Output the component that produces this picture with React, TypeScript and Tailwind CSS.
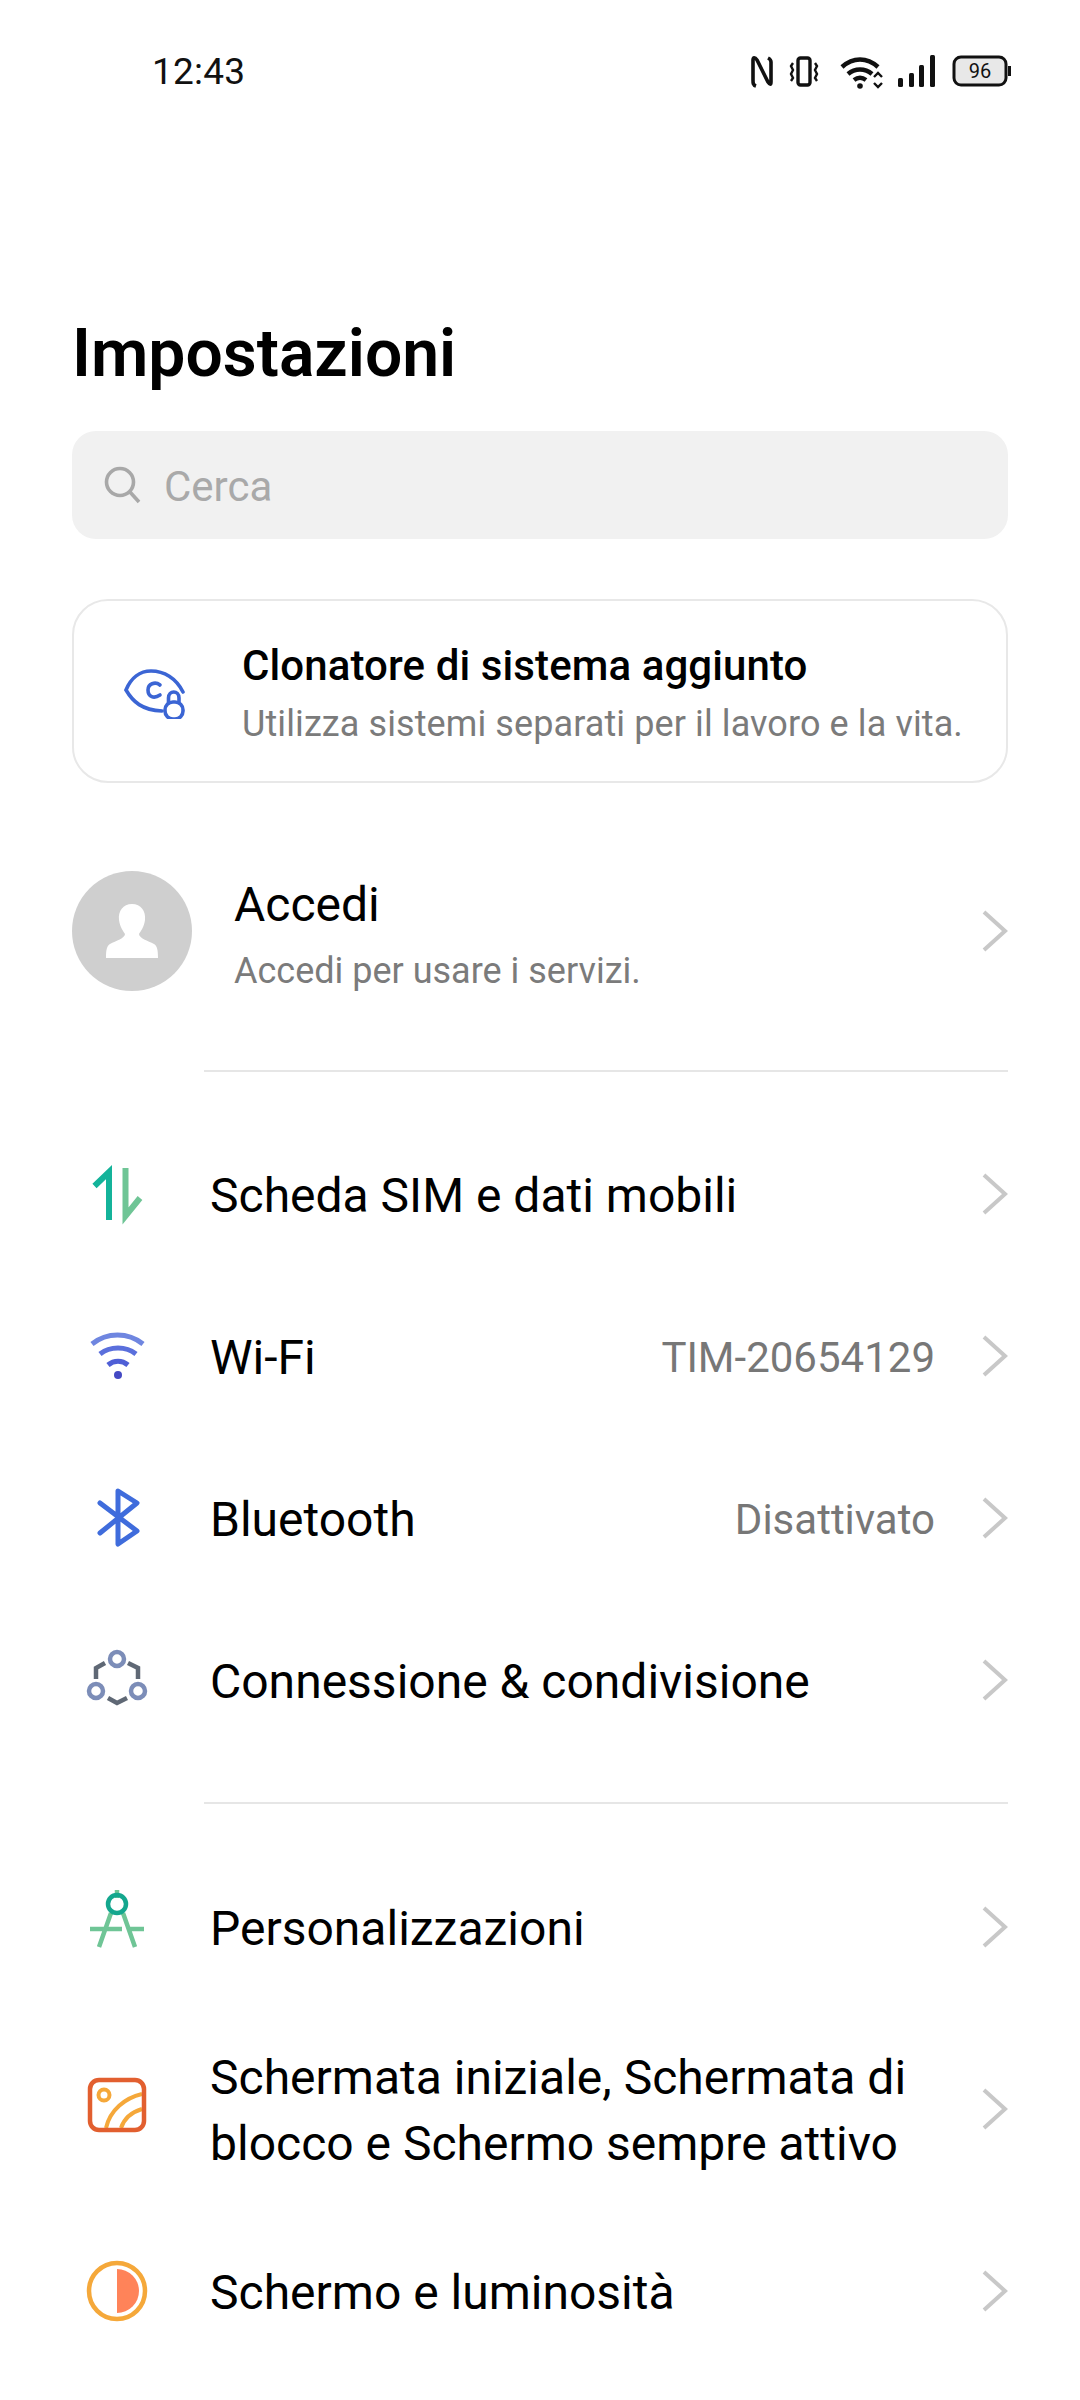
const font = "font-['Roboto',sans-serif]";

const Chevron = () => (
  <svg width="30" height="48" viewBox="0 0 30 48" fill="none" className="shrink-0">
    <path d="M6 5 L27 24 L6 43" stroke="#c8c8c8" strokeWidth="4" />
  </svg>
);

const Icon = ({ children, top = 0 }: { children: React.ReactNode; top?: number }) => (
  <svg width="120" height="120" viewBox={`0 ${top} 120 120`} fill="none" className="shrink-0 ml-[-12px]">
    {children}
  </svg>
);

const Row = ({
  icon,
  title,
  value,
  tall,
}: {
  icon: React.ReactNode;
  title: React.ReactNode;
  value?: string;
  tall?: boolean;
}) => (
  <div className={`flex items-center pl-[72px] pr-[72px] ${tall ? "h-[202px]" : "h-[162px]"}`}>
    {icon}
    <div className="ml-[30px] flex-1 pt-[3px] text-[48px] leading-[66px] text-black">{title}</div>
    {value && <span className="mr-[43px] pt-[2px] text-[42px] text-[#777777]">{value}</span>}
    <Chevron />
  </div>
);

const Divider = () => <div className="ml-[204px] mr-[72px] h-[2px] bg-[#e6e6e6]" />;

export default function App() {
  return (
    <div className={`${font} w-[1080px] h-[2400px] overflow-hidden bg-white`}>
      {/* status bar */}
      <div className="flex items-center justify-between h-[144px] pl-[152px] pr-[30px]">
        <span className="text-[37px] text-[#111111] tracking-[0.2px]">12:43</span>
        <svg width="300" height="40" viewBox="0 0 300 40" fill="none">
          <path d="M6 34 C3 33 3 31 3 28 V8 C3 5 5 5 7 8 L18 30 C20 33 21 33 21 30 V10 C21 8 20 7 18 6" stroke="#111" strokeWidth="3.6" />
          <rect x="48" y="6" width="12" height="27" rx="2.5" stroke="#111" strokeWidth="3.4" />
          <path d="M43 11 l-2 3 2 4 -2 4 2 4 -2 3 M65 11 l2 3 -2 4 2 4 -2 4 2 3" stroke="#111" strokeWidth="2.4" />
          <path d="M92 15 C103 5 117 5 128 15" stroke="#111" strokeWidth="4.5" />
          <path d="M98 22 C105 16 115 16 122 22" stroke="#111" strokeWidth="4.5" />
          <path d="M104 28 C108 25 112 25 116 28" stroke="#111" strokeWidth="4.5" />
          <circle cx="110" cy="34" r="2.8" fill="#111" />
          <path d="M124 25 l4 -4 4 4 M124 31 l4 4 4 -4" stroke="#111" strokeWidth="2.4" />
          <rect x="148" y="26" width="5" height="9" rx="1.5" fill="#111" />
          <rect x="159" y="21" width="5" height="14" rx="1.5" fill="#111" />
          <rect x="169" y="13" width="5" height="22" rx="1.5" fill="#111" />
          <rect x="180" y="3" width="5" height="32" rx="1.5" fill="#111" />
          <rect x="204" y="5" width="52" height="28" rx="7" fill="#e8e8e8" stroke="#111" strokeWidth="3" />
          <rect x="258" y="14" width="3" height="10" fill="#111" />
          <text x="230" y="26" textAnchor="middle" fontSize="20" fontFamily="Roboto" fill="#111">96</text>
        </svg>
      </div>

      {/* title */}
      <div className="mt-[170px] pl-[72px] text-[66px] leading-[80px] font-semibold text-black">Impostazioni</div>

      {/* search */}
      <div className="mt-[37px] mx-[72px] h-[108px] rounded-[24px] bg-[#f1f1f1] flex items-center pl-[32px]">
        <svg width="38" height="38" viewBox="0 0 38 38" fill="none">
          <circle cx="16" cy="16" r="13.5" stroke="#a8a8a8" strokeWidth="3.6" />
          <path d="M26 26 L35 36" stroke="#a8a8a8" strokeWidth="3.6" />
        </svg>
        <span className="ml-[22px] pt-[2px] text-[42px] text-[#a9a9a9]">Cerca</span>
      </div>

      {/* card */}
      <div className="mt-[60px] mx-[72px] h-[184px] rounded-[36px] border-2 border-[#e8e8e8] flex items-center pl-[50px]">
        <svg width="64" height="56" viewBox="24 23 64 56" fill="none" className="shrink-0">
          <path d="M83 52 C76 38 64 31 51 31 C40 31 31 38 26 50 C33 62 42 70 62 71" stroke="#3b65d4" strokeWidth="3.6" strokeLinecap="round" />
          <path d="M60 45 C55 41 48 44 48 50 C48 57 54 59 60 55" stroke="#3b65d4" strokeWidth="3.6" strokeLinecap="round" />
          <rect x="65" y="62" width="18" height="17" rx="8" stroke="#3b65d4" strokeWidth="3.6" />
          <path d="M68.500 63 V58 C68.500 50 79 50 79 58 V63" stroke="#3b65d4" strokeWidth="3.6" />
        </svg>
        <div className="ml-[54px] pt-[4px]">
          <div className="text-[42px] leading-[50px] font-medium tracking-[0.1px] text-black">Clonatore di sistema aggiunto</div>
          <div className="mt-[12px] text-[36px] leading-[42px] tracking-[0.1px] text-[#7b7b7b]">Utilizza sistemi separati per il lavoro e la vita.</div>
        </div>
      </div>

      {/* profile */}
      <div className="mt-[88px] mx-[72px] flex items-center h-[120px]">
        <div className="w-[120px] h-[120px] rounded-full bg-[#cfcfcf] flex items-center justify-center shrink-0">
          <svg width="56" height="56" viewBox="0 0 56 56">
            <path d="M28 1 C37 1 42 8 41 17 C40 24 37 28 35 31 C35 35 44 38 50 41 C53 43 54 46 54 55 H2 C2 46 3 43 6 41 C12 38 21 35 21 31 C19 28 16 24 15 17 C14 8 19 1 28 1 Z" fill="#fff" />
          </svg>
        </div>
        <div className="ml-[42px] flex-1 pt-[6px]">
          <div className="text-[48px] leading-[60px] text-black">Accedi</div>
          <div className="mt-[14px] text-[36px] leading-[44px] text-[#7b7b7b]">Accedi per usare i servizi.</div>
        </div>
        <Chevron />
      </div>

      <div className="mt-[79px]"><Divider /></div>

      <div className="mt-[41px]">
        <Row
          title="Scheda SIM e dati mobili"
          icon={
            <Icon top={4}>
              <path d="M34.500 56 L49 42 V90" stroke="#14b39a" strokeWidth="6" />
              <path d="M65.500 38 V86 L80 68" stroke="#6fc596" strokeWidth="6" />
            </Icon>
          }
        />
        <Row
          title="Wi-Fi"
          value="TIM-20654129"
          icon={
            <Icon>
              <path d="M32 48 C47 36 68 36 83 48" stroke="#6f86e0" strokeWidth="5" />
              <path d="M40 58 C50 50 66 50 76 58" stroke="#5a6fdc" strokeWidth="5" />
              <path d="M48 69 C54 64 62 64 68 69" stroke="#4f5fd6" strokeWidth="5" />
              <circle cx="58" cy="79" r="4" fill="#4449c4" />
            </Icon>
          }
        />
        <Row
          title="Bluetooth"
          value="Disattivato"
          icon={
            <Icon>
              <path d="M40 45 L77 73 L58 86 V33 L77 45 L40 75" stroke="#3f6cdc" strokeWidth="5" strokeLinejoin="round" strokeLinecap="round" />
            </Icon>
          }
        />
        <Row
          title="Connessione & condivisione"
          icon={
            <Icon>
              <circle cx="57" cy="39" r="7" stroke="#7c8db8" strokeWidth="4.500" />
              <circle cx="36" cy="71" r="7" stroke="#7c8db8" strokeWidth="4.500" />
              <circle cx="78" cy="71" r="7" stroke="#7c8db8" strokeWidth="4.500" />
              <path d="M45 43 L36 48 V59 M68 43 L78 48 V59 M48 78 L57 83 L67 78" stroke="#5f6875" strokeWidth="4.500" />
            </Icon>
          }
        />
      </div>

      <div className="mt-[41px]"><Divider /></div>

      <div className="mt-[42px]">
        <Row
          title="Personalizzazioni"
          icon={
            <Icon top={4}>
              <path d="M57 27 V35" stroke="#6fc596" strokeWidth="4.500" />
              <path d="M30 66 H62 M68 66 H84 M51 50 L39 84 M63 50 L75 84" stroke="#6fc596" strokeWidth="4.500" />
              <circle cx="57" cy="41" r="9" stroke="#14a78e" strokeWidth="4.500" />
            </Icon>
          }
        />
        <Row
          tall
          title={<>Schermata iniziale, Schermata di<br />blocco e Schermo sempre attivo</>}
          icon={
            <Icon top={2}>
              <path d="M46 81 C50 63 65 51 82 47 M61 81 C64 72 72 65 82 62" stroke="#f5a83a" strokeWidth="4" />
              <circle cx="44" cy="48" r="5.500" stroke="#f5a83a" strokeWidth="4" />
              <rect x="30" y="33" width="54" height="50" rx="9" stroke="#e25f2f" strokeWidth="4.500" />
            </Icon>
          }
        />
        <Row
          title="Schermo e luminosità"
          icon={
            <Icon>
              <circle cx="57" cy="60" r="28" stroke="#f5a83a" strokeWidth="4.500" />
              <path d="M57 38 A22 22 0 0 1 57 82 Z" fill="#ff8359" />
            </Icon>
          }
        />
      </div>
    </div>
  );
}
